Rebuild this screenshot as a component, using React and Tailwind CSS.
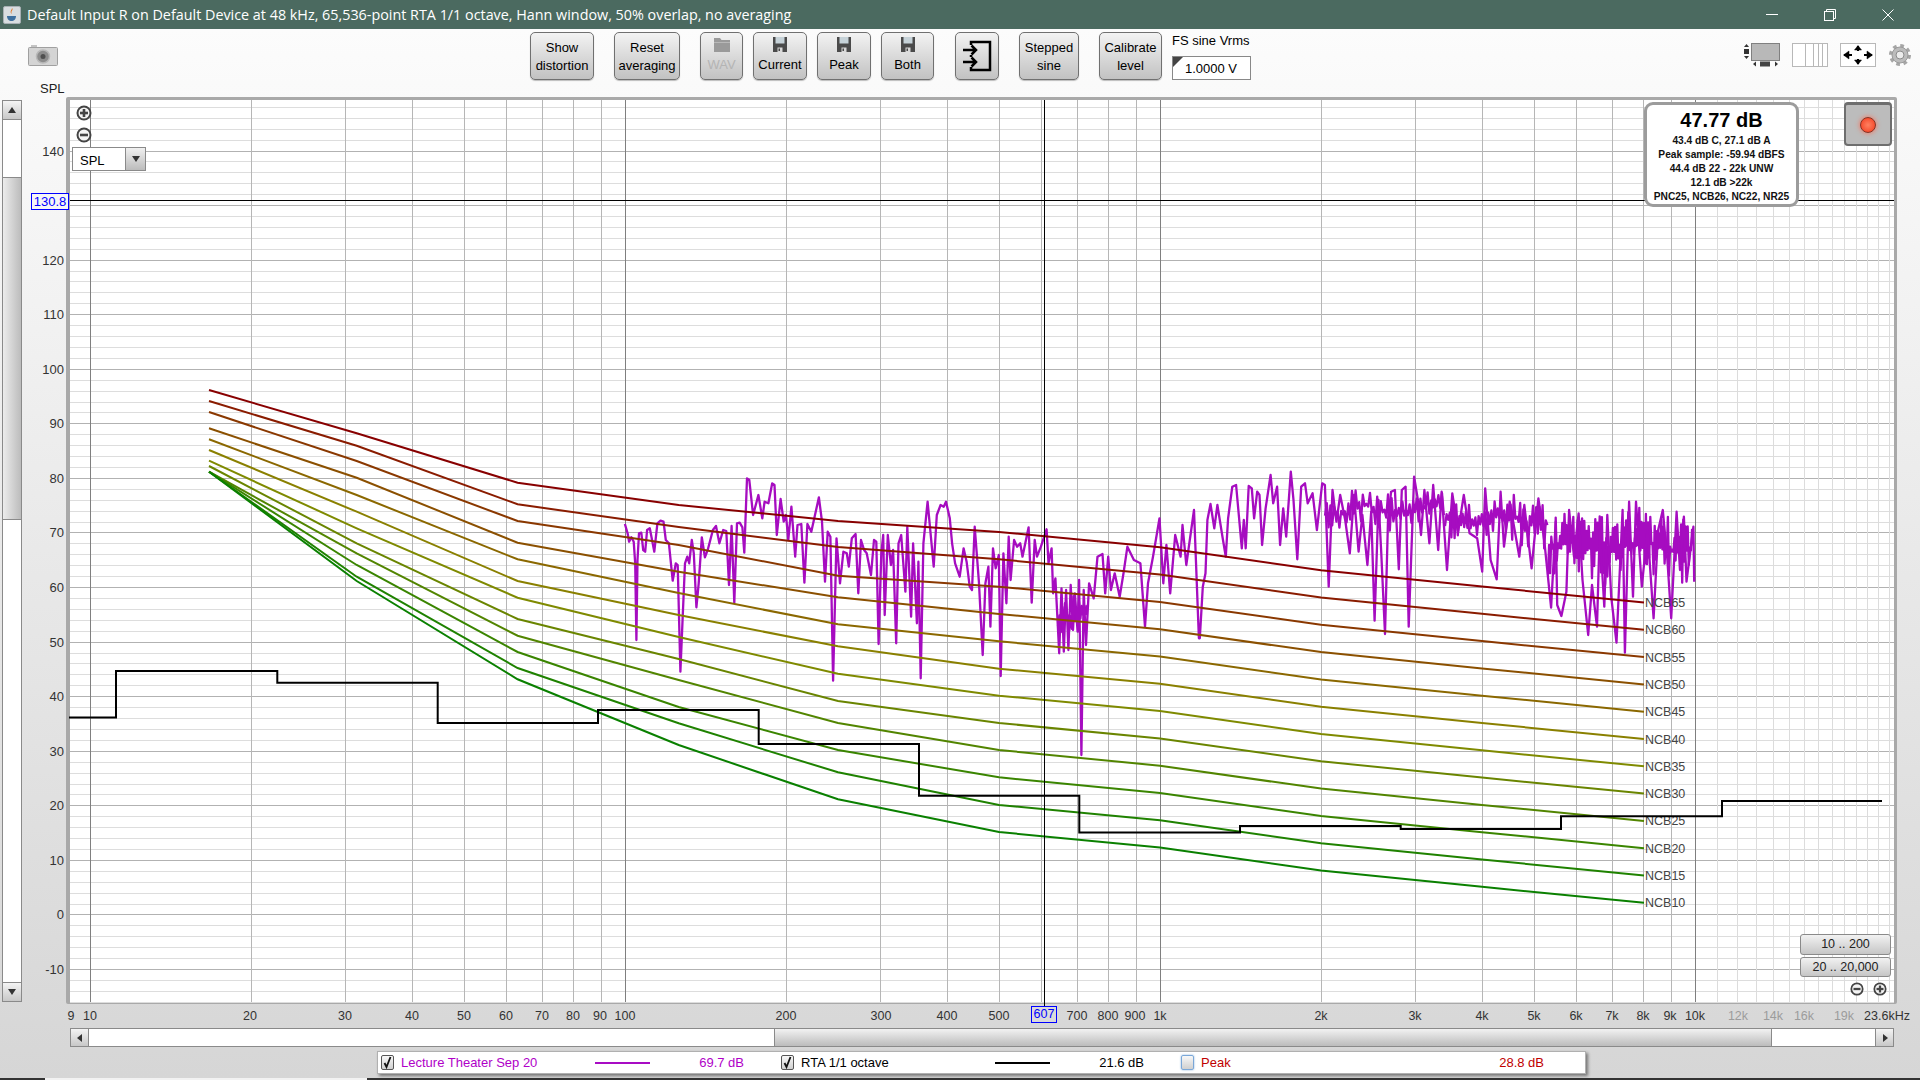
import React from 'react';

const fx = (f) => 90 + 535 * Math.log10(f / 10);
const dy = (db) => 150.5 + (140 - db) * 5.457;

// NCB curves, y in page px at 16, 31.5, 63, 125, 250 and 500 Hz, 65 first
const NCB_LOW = [
  [390, 433.3, 482.7, 505, 521, 532],
  [401, 445.7, 504.3, 527, 547, 559.3],
  [412, 461, 521, 545, 575.7, 586.7],
  [428.3, 477.7, 542.7, 571.7, 597.3, 614],
  [439.3, 495, 559.3, 593, 624.3, 641.3],
  [450, 511.7, 581, 615, 646.3, 668.7],
  [460.7, 528.3, 597.7, 637, 673.7, 695.7],
  [466, 543.3, 619, 659, 701, 723],
  [471.7, 553.3, 635.7, 680, 723, 750],
  [471.7, 565, 652, 707, 750, 777.3],
  [471.7, 576.7, 668, 723.3, 772.3, 805],
  [471.7, 581, 679.3, 745, 799.3, 832],
];
const NCB_HIGH = [547.3, 570.2, 586.5, 602.5];
const NCB_X = [209, 356.7, 517.6, 678.7, 838, 999, 1160, 1321, 1482, 1644];
const NCB_COLORS = ['#880000', '#8a1c00', '#8a3800', '#8b5000', '#8b6800', '#8a8000', '#7f8a00', '#6a8500', '#528500', '#3a8500', '#1f8200', '#0a8000'];

const RTA_STEPS = [
  [69, 717.6], [116, 671], [277.3, 682.7], [437.7, 723], [598, 710], [758.7, 744], [919, 795.7],
  [1079.3, 832.5], [1240, 826], [1400.7, 829], [1561, 816.3], [1722, 801],
];

// trace of the measured response, read off crops of the plot
const TRACE_A = [[65,222],[72,250],[76,275],[82,262],[88,275],[92,340],[95,570],[98,330],[102,250],[108,248],[113,300],[118,305],[123,240],[130,235],[142,305],[150,220],[158,212],[166,215],[172,270],[180,280],[190,392],[198,340],[203,345],[210,665],[216,500],[222,340],[228,320],[233,340],[240,270],[245,310],[252,472],[258,400],[266,262],[274,322],[282,298],[295,240],[303,228],[312,280],[322,240],[330,243],[337,405],[344,228],[351,458],[358,220],[365,218],[372,232],[377,308],[384,85],[390,90],[400,195],[414,135],[424,205],[430,155],[440,160],[450,100],[456,105],[462,255],[472,147],[480,215],[486,195],[492,270],[500,170],[510,320],[516,225],[526,222],[534,398],[542,222],[552,245],[572,142],[580,215],[588,395],[595,245],[602,260],[609,692],[618,265],[627,400],[636,305],[645,310],[650,350],[658,265],[668,252],[675,430],[682,270],[690,300],[697,310],[708,375],[716,270],[722,275],[728,582],[735,310],[740,255],[744,495],[752,255],[760,345],[766,300],[774,580],[780,280],[787,255],[798,425],[803,230],[813,500],[818,280],[828,520],[832,335],[838,685],[845,280],[856,155],[872,350],[880,195],[890,165],[898,170],[904,155],[914,205],[920,280],[928,340],[940,380],[950,295],[958,335],[966,410],[972,420],[979,230],[990,395],[1000,615],[1007,400],[1015,350],[1020,530],[1027,295],[1034,355],[1042,315],[1047,678],[1054,310],[1062,460],[1068,260],[1073,390],[1082,270],[1090,290],[1098,280],[1104,320],[1120,232],[1128,458],[1136,270],[1142,320],[1152,290],[1167,238],[1172,340],[1180,295],[1184,430],[1190,385],[1200,610],[1206,415],[1212,605],[1218,420],[1224,600],[1230,405],[1236,540],[1241,430],[1248,545],[1252,390],[1258,915],[1264,420],[1270,585],[1278,400],[1290,445],[1300,320],[1313,312],[1320,430],[1328,320],[1335,420],[1345,370],[1358,440],[1368,370],[1378,290],[1395,330],[1412,340],[1424,530],[1432,400],[1445,320],[1462,205],[1472,400],[1480,285],[1490,430],[1503,255],[1517,320],[1522,225],[1532,345],[1552,180],[1565,565]];
const TRACE_B = [[130,565],[138,410],[145,370],[150,210],[158,162],[168,235],[176,165],[190,265],[198,320],[204,205],[215,110],[225,105],[232,195],[240,295],[245,210],[250,295],[258,108],[266,115],[272,205],[280,125],[286,135],[293,285],[302,175],[315,75],[322,160],[332,110],[340,285],[348,175],[356,260],[368,65],[375,150],[385,328],[395,110],[405,100],[412,160],[425,130],[436,240],[450,100],[457,105],[467,410],[477,120],[487,215],[497,135],[510,210],[522,310],[533,135],[545,305],[555,195],[568,345],[578,185],[587,512],[597,150],[604,305],[614,552],[622,210],[630,125],[640,120],[650,358],[658,120],[668,110],[676,530],[690,80],[700,150],[708,255],[717,120],[730,280],[740,105],[753,300],[762,125],[776,360],[790,130],[805,245],[820,135],[835,250],[855,265],[868,365],[876,115],[890,330],[906,388],[916,125],[925,290],[940,155],[965,320],[978,165],[997,355],[1015,145],[1030,270],[1048,473],[1060,215],[1064,465],[1075,498],[1088,425],[1095,180],[1108,320],[1120,190],[1130,390],[1145,555],[1155,405],[1168,530],[1175,240],[1187,470],[1195,195],[1205,440],[1219,578],[1235,180],[1241,608],[1252,155],[1262,440],[1270,155],[1285,410],[1300,240],[1316,505],[1328,240],[1340,180],[1352,330],[1362,505],[1376,185],[1385,360],[1395,200],[1402,395],[1420,230],[1422,395]];

const rnd = (i) => {
  const s = Math.sin(i * 127.1) * 43758.5453;
  return s - Math.floor(s);
};

// fine grass where the trace is too dense to read point by point
const grass = (x0, x1, top, bot, step) => {
  const out = [];
  const mid = top + (bot - top) * 0.5;
  let i = 0;
  for (let x = x0; x < x1; x += step) {
    const r = rnd(i + x0);
    const drift = Math.sin(x / 11) * 5;
    const y = i % 2 ? top + (mid - top) * r + drift : mid + (bot - mid) * r * r + drift;
    out.push(`${x.toFixed(1)},${y.toFixed(1)}`);
    i++;
  }
  return out.join(' ');
};

const tracePoints = [
  ...TRACE_A.map(([x, y]) => `${(600 + x / 2.613).toFixed(1)},${(450 + y / 3).toFixed(1)}`),
  ...TRACE_B.map(([x, y]) => `${(1150 + x / 2.613).toFixed(1)},${(450 + y / 3).toFixed(1)}`),
].join(' ');

const MINOR_F = [];
[10, 100, 1000].forEach((d) => {
  for (let k = 1; k < 10; k++) MINOR_F.push(d * k);
});
const HIGH_F = [11, 12, 13, 14, 15, 16, 17, 18, 19, 20, 21, 22, 23].map((k) => k * 1000);
const X_LABELS = [
  ['9', 71], ['10', 90], ['20', 250], ['30', 345], ['40', 412], ['50', 464], ['60', 506], ['70', 542], ['80', 573], ['90', 600], ['100', 625],
  ['200', 786], ['300', 881], ['400', 947], ['500', 999], ['700', 1077], ['800', 1108], ['900', 1135], ['1k', 1160],
  ['2k', 1321], ['3k', 1415], ['4k', 1482], ['5k', 1534], ['6k', 1576], ['7k', 1612], ['8k', 1643], ['9k', 1670], ['10k', 1695],
];
const X_MUTED = [['12k', 1738], ['14k', 1773], ['16k', 1804], ['19k', 1844]];

const Chart = () => {
  const hLines = [];
  for (let db = 148; db >= -16; db -= 2) hLines.push(db);
  return (
    <svg className="block shrink-0" width="1898" height="931" viewBox="22 97 1898 931">
      <rect x="66" y="97" width="1831" height="907" rx="2" fill="#a9a9a9" />
      <rect x="70" y="100" width="1824" height="902" fill="#ffffff" />
      <g shapeRendering="crispEdges" strokeWidth="1">
        {hLines.map((db) => (
          <line key={db} x1="70" x2="1894" y1={Math.round(dy(db)) + 0.5} y2={Math.round(dy(db)) + 0.5} stroke={db % 10 === 0 ? '#b2b2b2' : '#dddddd'} />
        ))}
        {HIGH_F.map((f) => (
          <line key={f} y1="100" y2="1002" x1={Math.round(fx(f)) + 0.5} x2={Math.round(fx(f)) + 0.5} stroke="#dcdcdc" />
        ))}
        {MINOR_F.map((f) => (
          <line key={f} y1="100" y2="1002" x1={Math.round(fx(f)) + 0.5} x2={Math.round(fx(f)) + 0.5} stroke="#b6b6b6" />
        ))}
        {[10, 100, 1000, 10000].map((f) => (
          <line key={f} y1="100" y2="1002" x1={Math.round(fx(f)) + 0.5} x2={Math.round(fx(f)) + 0.5} stroke="#7f7f7f" />
        ))}
      </g>

      <g fill="none" stroke="#a60cc0" strokeWidth="2.3" strokeLinejoin="round">
        <polyline points={grass(1058, 1088, 592, 640, 1.4)} />
        <polyline points={grass(1325, 1445, 492, 530, 1.8)} />
        <polyline points={grass(1445, 1548, 497, 545, 1.6)} />
        <polyline points={grass(1548, 1693, 512, 582, 1.1)} />
        <polyline points={tracePoints} />
      </g>

      {NCB_LOW.map((low, i) => {
        const ys = [...low, ...NCB_HIGH.map((y) => y + i * 27.3)];
        return (
          <polyline
            key={i}
            points={ys.map((y, k) => `${NCB_X[k]},${y.toFixed(1)}`).join(' ')}
            fill="none"
            stroke={NCB_COLORS[i]}
            strokeWidth="2"
          />
        );
      })}
      {NCB_LOW.map((_, i) => (
        <text key={i} x="1645" y={NCB_HIGH[3] + i * 27.3 + 4.5} fontSize="12.5" fill="#444444">{`NCB${65 - i * 5}`}</text>
      ))}

      <path
        d={`M${RTA_STEPS.map(([x, y], i) => (i ? `H${x}V${y}` : `${x} ${y}`)).join('')}H1882`}
        fill="none"
        stroke="#000000"
        strokeWidth="2"
      />

      <line x1="70" x2="1894" y1="200.5" y2="200.5" stroke="#000000" shapeRendering="crispEdges" />
      <line x1="1044.5" x2="1044.5" y1="100" y2="1006" stroke="#000000" shapeRendering="crispEdges" />

      {[140, 130, 120, 110, 100, 90, 80, 70, 60, 50, 40, 30, 20, 10, 0, -10].map((db) => (
        <text key={db} x="64" y={dy(db) + 5} textAnchor="end" fontSize="13" fill="#333333">{db}</text>
      ))}
      {X_LABELS.map(([t, x]) => (
        <text key={t} x={x} y="1020" textAnchor="middle" fontSize="12.5" fill="#333333">{t}</text>
      ))}
      {X_MUTED.map(([t, x]) => (
        <text key={t} x={x} y="1020" textAnchor="middle" fontSize="12.5" fill="#9c9c9c">{t}</text>
      ))}
      <text x="1887" y="1020" textAnchor="middle" fontSize="12.5" fill="#333333">23.6kHz</text>
    </svg>
  );
};

const Tri = ({ dir = 'up', className = '' }) => {
  const pts = { up: '5,2 9,8 1,8', down: '1,2 9,2 5,8', left: '7,1 7,9 2,5', right: '3,1 3,9 8,5' };
  return (
    <svg width="10" height="10" viewBox="0 0 10 10" className={className}>
      <polygon points={pts[dir]} fill="#333333" />
    </svg>
  );
};

const Floppy = () => (
  <svg width="14" height="15" viewBox="0 0 14 15" className="shrink-0">
    <rect x="0" y="0" width="14" height="15" fill="#4a4a4a" />
    <rect x="2.5" y="0" width="9" height="6.5" fill="#c6d2d8" />
    <rect x="4.5" y="10.5" width="5" height="4.5" fill="#d8d8d8" />
    <rect x="5.5" y="11.5" width="1.5" height="2.5" fill="#4a4a4a" />
  </svg>
);

const Folder = () => (
  <svg width="16" height="15" viewBox="0 0 16 15" className="shrink-0">
    <path d="M0 1h6l1.5 2H16v12H0z" fill="#9a9a9a" />
    <rect x="0" y="5" width="16" height="1" fill="#b8b8b8" />
  </svg>
);

const btn = 'flex h-12 shrink-0 flex-col items-center justify-center rounded-[5px] border border-[#707070] bg-linear-to-b from-[#f3f3f3] to-[#c2c2c2] text-[13px] leading-[18px] shadow-[0_1px_1px_rgba(0,0,0,0.25)]';

const TextBtn = ({ w, ml, lines }) => (
  <div className={`${btn} ${w} ${ml} pt-[1px] text-black`}>
    {lines.map((l) => <span key={l}>{l}</span>)}
  </div>
);

const SaveBtn = ({ w, ml, label }) => (
  <div className={`${btn} ${w} ${ml} justify-start pt-[4px] text-black`}>
    <Floppy />
    <span className="mt-[4px]">{label}</span>
  </div>
);

const ZoomIcon = ({ plus, size = 16 }) => (
  <svg width={size} height={size} viewBox="0 0 16 16" className="block">
    <circle cx="8" cy="8" r="6.5" fill="#f4f4f4" stroke="#444444" strokeWidth="2" />
    <rect x="4" y="6.7" width="8" height="2.6" fill="#444444" />
    {plus && <rect x="6.7" y="4" width="2.6" height="8" fill="#444444" />}
  </svg>
);

const Check = ({ checked, focus }) => (
  <div className={`flex h-[15px] w-[13px] shrink-0 items-center justify-center rounded-[2px] border bg-linear-to-b from-[#f8f8f8] to-[#d0d0d0] ${focus ? 'border-[#7aa7d8] shadow-[0_0_2px_#7aa7d8]' : 'border-[#555555]'}`}>
    {checked && (
      <svg width="11" height="13" viewBox="0 0 11 13">
        <path d="M2.5 7l2 4 4-10" fill="none" stroke="#111111" strokeWidth="1.8" />
      </svg>
    )}
  </div>
);

const LegendItem = ({ label, value, line, color, checked, focus }) => (
  <div className="flex h-full w-[400px] shrink-0 items-center" style={{ color }}>
    <Check checked={checked} focus={focus} />
    <span className="ml-[7px] w-[194px] shrink-0">{label}</span>
    <div className="h-[2px] w-[55px] shrink-0" style={{ backgroundColor: line || 'transparent' }} />
    <span className="w-[94px] shrink-0 text-right">{value}</span>
  </div>
);

const App = () => {
  return (
    <div className="flex h-[1080px] w-[1920px] flex-col overflow-hidden bg-white font-['Liberation_Sans',Arial,sans-serif]">
      <header className="flex h-[29px] shrink-0 items-center bg-[#4b6a60] text-white">
        <svg width="18" height="18" viewBox="0 0 18 18" className="ml-[3px] shrink-0">
          <rect x="0.5" y="0.5" width="17" height="17" rx="1.5" fill="#d8dde0" stroke="#a8b0b4" />
          <path d="M9 2c2 2-2 3 0 6-3-2 0-4 0-6z" fill="#e0701c" />
          <path d="M4 10h9c0 3-2 5-4.500 5S4 13 4 10z" fill="#3d6f9e" />
        </svg>
        <span className="ml-[6px] font-['Open_Sans',sans-serif] text-[14.35px] whitespace-nowrap">
          Default Input R on Default Device at 48 kHz, 65,536-point RTA 1/1 octave, Hann window, 50% overlap, no averaging
        </span>
        <div className="ml-auto flex pr-[3px]">
          <div className="flex h-[29px] w-[58px] items-center justify-center">
            <svg width="12" height="2"><rect width="12" height="1" fill="#ffffff" /></svg>
          </div>
          <div className="flex h-[29px] w-[58px] items-center justify-center">
            <svg width="12" height="12" viewBox="0 0 12 12" fill="none" stroke="#ffffff">
              <rect x="0.5" y="2.500" width="9" height="9" />
              <path d="M2.500 2.500V0.500H11.500V9.500H9.500" />
            </svg>
          </div>
          <div className="flex h-[29px] w-[58px] items-center justify-center">
            <svg width="12" height="12" viewBox="0 0 12 12" stroke="#ffffff">
              <path d="M0.500 0.500L11.500 11.500M11.500 0.500L0.500 11.500" />
            </svg>
          </div>
        </div>
      </header>

      <div className="flex min-h-0 flex-1 flex-col bg-linear-to-b from-[#fcfcfc] to-[#d6d6d6]">
        <div className="flex h-[68px] shrink-0 items-start">
          <div className="ml-[28px] w-[30px] shrink-0 pt-[16px]">
            <svg width="30" height="21" viewBox="0 0 30 21" className="block">
              <rect x="3" y="0" width="6" height="3" fill="#c4c4c4" />
              <rect x="0.500" y="2.500" width="29" height="18" rx="1" fill="#d4d4d4" stroke="#a0a0a0" />
              <circle cx="15" cy="11.500" r="6.500" fill="#8c8c8c" stroke="#b8b8b8" strokeWidth="1.500" />
              <circle cx="15" cy="11.500" r="2.500" fill="#4f4f4f" />
            </svg>
            <div className="mt-[15px] ml-[12px] text-[13px] leading-[16px] text-[#222222]">SPL</div>
          </div>

          <div className="mt-[3px] ml-[472px] flex items-start">
            <TextBtn w="w-[64px]" ml="" lines={['Show', 'distortion']} />
            <TextBtn w="w-[66px]" ml="ml-[20px]" lines={['Reset', 'averaging']} />
            <div className={`${btn} ml-[20px] w-[43px] justify-start pt-[4px] text-[#b4b4b4]`}>
              <Folder />
              <span className="mt-[4px]">WAV</span>
            </div>
            <SaveBtn w="w-[54px]" ml="ml-[10px]" label="Current" />
            <SaveBtn w="w-[54px]" ml="ml-[10px]" label="Peak" />
            <SaveBtn w="w-[53px]" ml="ml-[10px]" label="Both" />
            <div className={`${btn} ml-[21px] w-[44px]`}>
              <svg width="30" height="32" viewBox="0 0 30 32" fill="none" stroke="#000000" strokeWidth="2.500">
                <path d="M9 5V2H28V30H9V27" />
                <path d="M9 15V17" />
                <path d="M1 10H14M9.500 5.500L14 10L9.500 14.500" />
                <path d="M1 22H14M9.500 17.500L14 22L9.500 26.500" />
              </svg>
            </div>
            <TextBtn w="w-[60px]" ml="ml-[20px]" lines={['Stepped', 'sine']} />
            <TextBtn w="w-[63px]" ml="ml-[20px]" lines={['Calibrate', 'level']} />
            <div className="ml-[10px] w-[79px] shrink-0 pt-[1px]">
              <div className="text-[13px] leading-[16px] text-black">FS sine Vrms</div>
              <div className="relative mt-[7px] flex h-[24px] items-center border border-[#888888] bg-white pl-[12px] text-[13px] text-black">
                <div className="absolute top-0 left-0 h-0 w-0 border-t-[10px] border-r-[10px] border-t-[#444444] border-r-transparent" />
                <span className="mt-[1px]">1.0000 V</span>
              </div>
            </div>
          </div>

          <div className="mt-[14px] ml-[492px] flex items-start gap-[12px]">
            <svg width="37" height="24" viewBox="0 0 37 24" className="block shrink-0">
              <rect x="8.500" y="0.500" width="28" height="17" fill="#b8b8b8" stroke="#808080" />
              <rect x="1" y="6" width="5" height="5" fill="#333333" />
              <polygon points="3.500,1 6,4 1,4" fill="#333333" />
              <polygon points="1,13 6,13 3.500,16" fill="#333333" />
              <rect x="17" y="18.500" width="10" height="5" fill="#444444" />
              <polygon points="13,18.500 13,23.500 10,21" fill="#333333" />
              <polygon points="32,18.500 32,23.500 35,21" fill="#333333" />
            </svg>
            <svg width="36" height="24" viewBox="0 0 36 24" className="block shrink-0" fill="none" stroke="#b8b8b8">
              <rect x="0.500" y="0.500" width="35" height="23" fill="#ffffff" />
              <path d="M13.500 0V24M21.500 0V24M26.500 0V24M30.500 0V24" />
            </svg>
            <svg width="36" height="24" viewBox="0 0 36 24" className="block shrink-0">
              <rect x="0.500" y="0.500" width="35" height="23" fill="#ffffff" stroke="#b8b8b8" />
              <g stroke="#000000" strokeWidth="2" fill="#000000">
                <path d="M4 12H12M24 12H32M18 3V8M18 16V21" />
                <path d="M9 8L3.500 12L9 16zM27 8L32.500 12L27 16zM14.500 7L18 2.500L21.500 7zM14.500 17L18 21.500L21.500 17z" strokeWidth="0.500" />
              </g>
            </svg>
            <svg width="22" height="22" viewBox="0 0 22 22" className="mt-[1px] ml-[1px] block shrink-0">
              <circle cx="11" cy="11" r="9.300" fill="none" stroke="#a6a6a6" strokeWidth="3.400" strokeDasharray="3.650 3.650" />
              <circle cx="11" cy="11" r="8" fill="#bcbcbc" stroke="#9a9a9a" />
              <circle cx="11" cy="11" r="4" fill="#ececec" stroke="#8c8c8c" />
            </svg>
          </div>
        </div>

        <div className="relative flex h-[931px] shrink-0 items-start">
          <div className="mt-[3px] ml-[2px] flex h-[902px] w-[20px] shrink-0 flex-col border border-[#8a8a8a] bg-white">
            <div className="flex h-[19px] items-center justify-center border-b border-[#8a8a8a] bg-linear-to-b from-[#f4f4f4] to-[#c8c8c8]"><Tri dir="up" /></div>
            <div className="h-[57px]" />
            <div className="h-[343px] border-y border-[#8a8a8a] bg-linear-to-r from-[#ececec] to-[#bcbcbc]" />
            <div className="flex-1" />
            <div className="flex h-[19px] items-center justify-center border-t border-[#8a8a8a] bg-linear-to-b from-[#f4f4f4] to-[#c8c8c8]"><Tri dir="down" /></div>
          </div>
          <Chart />

          <div className="absolute top-[8px] left-[72px] flex flex-col">
            <div className="ml-[4px]"><ZoomIcon plus /></div>
            <div className="mt-[6px] ml-[4px]"><ZoomIcon /></div>
            <div className="mt-[4px] flex h-[24px] w-[74px] border border-[#8a8a8a] bg-white text-[13px] text-black">
              <span className="flex-1 pt-[3px] pl-[7px]">SPL</span>
              <div className="flex w-[20px] items-center justify-center border-l border-[#8a8a8a] bg-linear-to-b from-[#f0f0f0] to-[#bcbcbc]"><Tri dir="down" /></div>
            </div>
          </div>

          <div className="absolute top-[96px] left-[31px] flex h-[17px] w-[38px] items-center justify-center border-[1.5px] border-[#0000ff] bg-[#f6f6f6] text-[13px] text-[#0000ff]">130.8</div>
          <div className="absolute top-[909px] left-[1031px] flex h-[17px] w-[26px] items-center justify-center border-[1.5px] border-[#0000ff] bg-[#dadada] text-[12.5px] text-[#0000ff]">607</div>

          <div className="absolute top-[5px] left-[1644px] flex h-[105px] w-[155px] flex-col items-center rounded-[9px] border-[3px] border-[#9c9c9c] bg-white text-[10.2px] leading-[14px] font-bold text-[#111111]">
            <div className="mt-[1px] text-[20px] leading-[28px] text-black">47.77 dB</div>
            <div>43.4 dB C, 27.1 dB A</div>
            <div>Peak sample: -59.94 dBFS</div>
            <div>44.4 dB 22 - 22k UNW</div>
            <div>12.1 dB &gt;22k</div>
            <div className="whitespace-nowrap">PNC25, NCB26, NC22, NR25</div>
          </div>

          <div className="absolute top-[5px] left-[1844px] flex h-[44px] w-[48px] items-center justify-center rounded-[4px] border-2 border-t-[3px] border-[#6e6e6e] bg-[#bcbcbc]">
            <div className="h-[16px] w-[16px] rounded-full border border-[#8a3020] bg-radial from-[#ff8060] to-[#f03010] shadow-[0_0_5px_#ff6a50]" />
          </div>

          <div className="absolute top-[837px] left-[1800px] flex w-[91px] flex-col text-[12.5px] text-[#222222]">
            <div className="flex h-[21px] items-center justify-center rounded-[3px] border border-[#8a8a8a] bg-linear-to-b from-[#f2f2f2] to-[#c6c6c6]">10 .. 200</div>
            <div className="mt-[2px] flex h-[20px] items-center justify-center rounded-[3px] border border-[#8a8a8a] bg-linear-to-b from-[#f2f2f2] to-[#c6c6c6]">20 .. 20,000</div>
            <div className="mt-[5px] ml-[50px] flex gap-[9px]">
              <ZoomIcon size={14} />
              <ZoomIcon plus size={14} />
            </div>
          </div>
        </div>

        <div className="ml-[70px] flex h-[19px] w-[1824px] shrink-0 border border-[#8a8a8a] bg-white">
          <div className="flex w-[18px] items-center justify-center border-r border-[#8a8a8a] bg-linear-to-b from-[#f4f4f4] to-[#c8c8c8]"><Tri dir="left" /></div>
          <div className="w-[685px]" />
          <div className="w-[998px] border-x border-[#8a8a8a] bg-linear-to-b from-[#f2f2f2] to-[#bcbcbc]" />
          <div className="flex-1" />
          <div className="flex w-[18px] items-center justify-center border-l border-[#8a8a8a] bg-linear-to-b from-[#f4f4f4] to-[#c8c8c8]"><Tri dir="right" /></div>
        </div>

        <div className="mt-[4px] ml-[377px] flex h-[23px] w-[1209px] shrink-0 items-center border border-[#b0b0b0] bg-white pl-[3px] text-[13px] shadow-[2px_2px_3px_rgba(0,0,0,0.45)]">
          <LegendItem label="Lecture Theater Sep 20" value="69.7 dB" line="#a80cc4" color="#b000c8" checked />
          <LegendItem label="RTA 1/1 octave" value="21.6 dB" line="#000000" color="#000000" checked />
          <LegendItem label="Peak" value="28.8 dB" color="#c00000" focus />
        </div>
      </div>

      <div className="flex h-[2px] shrink-0 bg-[#333333]">
        <div className="ml-[45px] h-full w-[322px] bg-[#f2f2f2]" />
      </div>
    </div>
  );
};

export default App;
